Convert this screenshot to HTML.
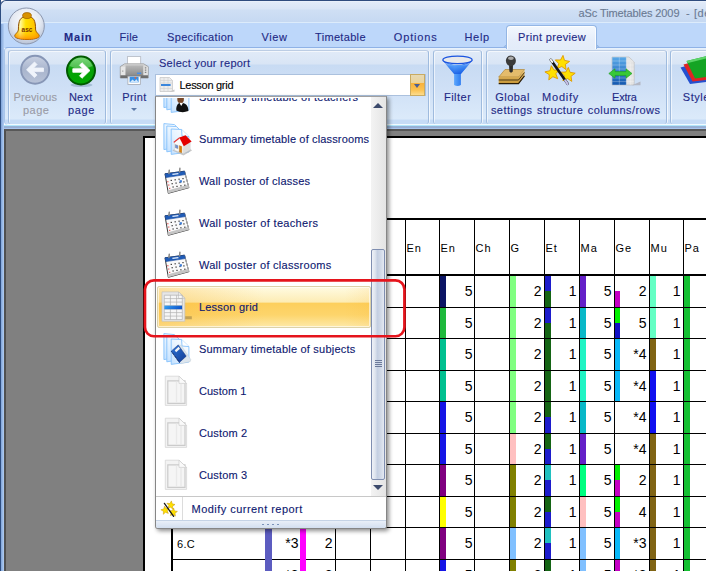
<!DOCTYPE html><html><head><meta charset="utf-8"><title>aSc Timetables 2009</title><style>
*{box-sizing:border-box;margin:0;padding:0}
html,body{width:706px;height:571px;overflow:hidden}
body{position:relative;background:#fff;font-family:"Liberation Sans",sans-serif;font-size:11px;color:#15428b}
.a{position:absolute}
.t{position:absolute;white-space:nowrap;line-height:13px;height:13px;z-index:3;-webkit-text-stroke:0.12px}
.c{text-align:center}
#title{left:0;top:0;width:706px;height:24px;border-top:1px solid #2f4c7e;border-left:1px solid #2f4c7e;border-radius:6px 0 0 0;background:linear-gradient(#f0f5fc 0,#e2ebf9 1px,#d9e5f6 8px,#cfdff4 9px,#c6d9f2 21px,#dcebfb 21px,#dcebfb 22px,#bfd8fa 22px)}
#tabs{left:0;top:23px;width:706px;height:25px;background:#bdd7fa}
#ribbon{left:4px;top:47px;width:702px;height:78px;border-top:1px solid #8fb2e6;border-left:1px solid #a9c5ea;border-radius:4px 0 0 4px;background:linear-gradient(#eaf3fd 0,#e1ebf8 2px,#d9e5f5 16px,#c8dbf3 17px,#cfe0f6 40px,#dbeafa 71px,#c6dcf6 72px,#c6dcf6 76px,#f2faff 76px,#f2faff 100%)}
.grp{position:absolute;top:50px;height:74px;border:1px solid #9fbbde;border-top-color:#bccde4;border-bottom:none;border-radius:3px 3px 3px 3px;box-shadow:1px 0 0 rgba(255,255,255,.7),inset 1px 1px 0 rgba(255,255,255,.6)}
#work{left:4px;top:129px;width:702px;height:442px;background:#808080;border-left:2px solid #505050;border-top:2px solid #585858}
#page{left:143px;top:136px;width:563px;height:435px;background:#fff;border-left:2px solid #000;border-top:2px solid #000}
.vl{position:absolute;width:1px;background:#000}
.hl{position:absolute;height:1px;background:#000}
.num{position:absolute;font-size:14px;line-height:16px;height:16px;color:#000;text-align:right;white-space:nowrap}
.hd{position:absolute;font-size:11px;line-height:13px;color:#000;white-space:nowrap;letter-spacing:1px}
#dd{left:155px;top:96px;width:232px;height:433px;background:#fff;border:1px solid #868686;border-top-color:#a0a0a0;border-radius:0 0 3px 3px;box-shadow:2px 2px 4px rgba(0,0,0,.45)}
.it{position:absolute;left:199px;white-space:nowrap;line-height:13px;height:13px;color:#14226e}
</style></head><body>
<div class="a" id="title"></div>
<div class="t" id="x_title" style="left:578.5px;top:7px;color:#6a7a93;letter-spacing:-0.096px;">aSc Timetables 2009</div>
<div class="t" id="x_title2" style="left:685.9px;top:7px;color:#6a7a93;letter-spacing:0.646px;">- [de</div>
<div class="a" id="tabs"></div>
<div class="a" style="z-index:2;left:506px;top:25px;width:91px;height:24px;border:1px solid #94b6e4;border-bottom:none;border-radius:4px 4px 0 0;background:linear-gradient(#f3f8fe,#e6eefa 60%,#e3ecf9);box-shadow:inset 1px 1px 0 rgba(255,255,255,.8),inset -1px 0 0 rgba(255,255,255,.8)"></div>
<div class="a" style="left:503px;top:45px;width:3px;height:3px;border-right:1px solid #94b6e4;border-bottom:1px solid #94b6e4;border-radius:0 0 3px 0"></div>
<div class="a" style="left:597px;top:45px;width:3px;height:3px;border-left:1px solid #94b6e4;border-bottom:1px solid #94b6e4;border-radius:0 0 0 3px"></div>
<div class="t" id="x_tab_Main" style="left:64.0px;top:31px;color:#1f2a86;font-weight:bold;letter-spacing:0.812px;">Main</div>
<div class="t" id="x_tab_File" style="left:119.5px;top:31px;color:#1f2a86;letter-spacing:0.255px;">File</div>
<div class="t" id="x_tab_Specification" style="left:167.1px;top:31px;color:#1f2a86;letter-spacing:0.310px;">Specification</div>
<div class="t" id="x_tab_View" style="left:261.5px;top:31px;color:#1f2a86;letter-spacing:0.615px;">View</div>
<div class="t" id="x_tab_Timetable" style="left:315.0px;top:31px;color:#1f2a86;letter-spacing:0.326px;">Timetable</div>
<div class="t" id="x_tab_Options" style="left:393.8px;top:31px;color:#1f2a86;letter-spacing:0.846px;">Options</div>
<div class="t" id="x_tab_Help" style="left:464.5px;top:31px;color:#1f2a86;letter-spacing:0.658px;">Help</div>
<div class="t" id="x_tab_Print_preview" style="left:518.0px;top:31px;color:#1f2a86;letter-spacing:0.343px;">Print preview</div>
<div class="a" id="ribbon"></div>
<div class="grp" style="left:8px;width:98px"></div>
<div class="grp" style="left:110px;width:319px"></div>
<div class="grp" style="left:433px;width:49px"></div>
<div class="grp" style="left:486px;width:181px"></div>
<div class="grp" style="left:670px;width:60px"></div>
<div class="a" style="left:0;top:125px;width:706px;height:4px;background:linear-gradient(#bdeeff 0,#a9e0f8 1px,#93abd0 1.6px,#93abd0 2.4px,#a8c5ee 3px,#a8c5ee 4px)"></div>
<div class="a" style="left:0;top:0;width:1px;height:571px;background:#2d4d80"></div>
<div class="a" style="left:1px;top:24px;width:3px;height:547px;background:linear-gradient(90deg,#7fa3d8,#b3cff4)"></div>
<div class="t" id="x_prev1" style="left:13.5px;top:91px;color:#9a9ba6;letter-spacing:0.115px;">Previous</div>
<div class="t" id="x_prev2" style="left:23.0px;top:104px;color:#9a9ba6;letter-spacing:0.505px;">page</div>
<div class="t" id="x_next1" style="left:68.9px;top:91px;color:#1f2a86;letter-spacing:0.258px;">Next</div>
<div class="t" id="x_next2" style="left:67.9px;top:104px;color:#1f2a86;letter-spacing:0.672px;">page</div>
<div class="t" id="x_print" style="left:122.2px;top:91px;color:#1f2a86;letter-spacing:0.394px;">Print</div>
<div class="a" style="left:131px;top:108px;width:0;height:0;border-left:3px solid transparent;border-right:3px solid transparent;border-top:3px solid #5b78a8"></div>
<div class="t" id="x_sel" style="left:159.0px;top:57px;color:#1f2a86;letter-spacing:0.251px;">Select your report</div>
<div class="t" id="x_filter" style="left:444.0px;top:91px;color:#1f2a86;letter-spacing:0.469px;">Filter</div>
<div class="t" id="x_glob1" style="left:495.2px;top:91px;color:#1f2a86;letter-spacing:0.481px;">Global</div>
<div class="t" id="x_glob2" style="left:490.9px;top:104px;color:#1f2a86;letter-spacing:0.468px;">settings</div>
<div class="t" id="x_mod1" style="left:542.1px;top:91px;color:#1f2a86;letter-spacing:0.759px;">Modify</div>
<div class="t" id="x_mod2" style="left:537.0px;top:104px;color:#1f2a86;letter-spacing:0.400px;">structure</div>
<div class="t" id="x_ext1" style="left:612.1px;top:91px;color:#1f2a86;letter-spacing:-0.222px;">Extra</div>
<div class="t" id="x_ext2" style="left:587.8px;top:104px;color:#1f2a86;letter-spacing:0.450px;">columns/rows</div>
<div class="t" id="x_style" style="left:682.8px;top:91px;color:#1f2a86;letter-spacing:0.558px;">Style</div>
<div class="a" style="left:155px;top:74px;width:271px;height:22px;background:#fff;border:1px solid #abc1de"></div>
<div class="a" style="left:410px;top:74px;width:15px;height:22px;background:linear-gradient(#e6d9b4 0,#ecd49a 38%,#f9b23a 42%,#fbc252 75%,#fddc8c 100%);border:1px solid #c9ab62"></div>
<div class="a" style="left:414px;top:84px;width:0;height:0;border-left:3.5px solid transparent;border-right:3.5px solid transparent;border-top:4px solid #4a5f94"></div>
<div class="t" id="x_combo" style="left:179.5px;top:79px;color:#000;letter-spacing:-0.287px;">Lesson grid</div>
<svg class="a" style="left:0;top:0" width="706" height="130" viewBox="0 0 706 130">
<defs>
<radialGradient id="gOrb" cx="50%" cy="35%" r="65%"><stop offset="0" stop-color="#ffffff"/><stop offset="0.6" stop-color="#e4e9f2"/><stop offset="1" stop-color="#b9c3d6"/></radialGradient>
<linearGradient id="gBell" x1="0" y1="0" x2="1" y2="0"><stop offset="0" stop-color="#f0a800"/><stop offset="0.22" stop-color="#fff8a0"/><stop offset="0.45" stop-color="#ffe000"/><stop offset="0.8" stop-color="#ffc400"/><stop offset="1" stop-color="#f09000"/></linearGradient>
<linearGradient id="gBell2" x1="0" y1="0" x2="0" y2="1"><stop offset="0.45" stop-color="#ffe600" stop-opacity="0"/><stop offset="1" stop-color="#ff8800" stop-opacity="0.85"/></linearGradient>
<linearGradient id="gPrev" x1="0" y1="0" x2="0" y2="1"><stop offset="0" stop-color="#c9d1e3"/><stop offset="0.5" stop-color="#a9b5cd"/><stop offset="1" stop-color="#b9c3d8"/></linearGradient>
<linearGradient id="gNext" x1="0" y1="0" x2="0" y2="1"><stop offset="0" stop-color="#4ccc4c"/><stop offset="0.45" stop-color="#06a006"/><stop offset="1" stop-color="#00a800"/></linearGradient>
<linearGradient id="gPrn" x1="0" y1="0" x2="0" y2="1"><stop offset="0" stop-color="#e6e6e6"/><stop offset="1" stop-color="#9a9a9a"/></linearGradient>
<linearGradient id="gPrn2" x1="0" y1="0" x2="0" y2="1"><stop offset="0" stop-color="#b8b8b8"/><stop offset="1" stop-color="#8a8a8a"/></linearGradient>
<linearGradient id="gFun" x1="0" y1="0" x2="1" y2="0"><stop offset="0" stop-color="#0f4ee0"/><stop offset="0.4" stop-color="#5aa4fc"/><stop offset="0.55" stop-color="#3a88f4"/><stop offset="1" stop-color="#0c44d8"/></linearGradient>
<linearGradient id="gFun2" x1="0" y1="0" x2="0" y2="1"><stop offset="0" stop-color="#e8f4ff"/><stop offset="0.35" stop-color="#4c98f8"/><stop offset="1" stop-color="#0c50e0"/></linearGradient>
<linearGradient id="gTan" x1="0" y1="0" x2="0" y2="1"><stop offset="0" stop-color="#e8c070"/><stop offset="1" stop-color="#c89838"/></linearGradient>
<linearGradient id="gBlu" x1="0" y1="0" x2="0" y2="1"><stop offset="0" stop-color="#58a8e8"/><stop offset="1" stop-color="#1458b0"/></linearGradient>
</defs>
<circle cx="26.3" cy="26" r="18" fill="url(#gOrb)" stroke="#8c97ae" stroke-width="1"/>
<path d="M18.4 30 C18.4 20.5 20 16.6 27 16.6 C34 16.6 35.6 20.5 35.6 30 C36 33 39.2 33.6 39.2 36 C39.2 40.6 14.8 40.6 14.8 36 C14.8 33.6 18 33 18.4 30 Z" fill="url(#gBell)" stroke="#8e4e00" stroke-width="1"/>
<path d="M18.4 30 C18.4 20.5 20 16.6 27 16.6 C34 16.6 35.6 20.5 35.6 30 C36 33 39.2 33.6 39.2 36 C39.2 40.6 14.8 40.6 14.8 36 C14.8 33.6 18 33 18.4 30 Z" fill="url(#gBell2)"/>
<ellipse cx="27" cy="15.6" rx="4.4" ry="3" fill="#d89200" stroke="#9a5a00" stroke-width="0.7"/>
<text x="27" y="32" font-family="Liberation Sans, sans-serif" font-size="6.5" font-weight="bold" fill="#7a3400" text-anchor="middle">asc</text>
<circle cx="35.1" cy="69.8" r="14" fill="url(#gPrev)" stroke="#8796b6" stroke-width="1.9"/>
<path d="M26.5 69.8 L34.5 62 L37 64.5 L33.6 68 L43.5 68 L43.5 71.6 L33.6 71.6 L37 75.1 L34.5 77.6 Z" fill="#f0f4fb" stroke="#f0f4fb" stroke-width="0.8" stroke-linejoin="round"/>
<ellipse cx="81.5" cy="85" rx="11" ry="2" fill="#5a7a9a" opacity="0.35"/><circle cx="81" cy="70.5" r="14" fill="url(#gNext)" stroke="#005a00" stroke-width="2"/><path d="M69.5 66 A12 12 0 0 1 92.5 66 Q81 72 69.5 66 Z" fill="#ffffff" opacity="0.28"/>
<path d="M90 70.5 L82 62.7 L79.5 65.2 L82.9 68.7 L72.8 68.7 L72.8 72.3 L82.9 72.3 L79.5 75.8 L82 78.3 Z" fill="#fff" stroke="#fff" stroke-width="0.8" stroke-linejoin="round"/>
<rect x="127.5" y="56.6" width="13.2" height="8.4" fill="#fff" stroke="#b4b8c2" stroke-width="0.8"/>
<path d="M124.8 63.8 H143.6 L148.2 66.6 V78 H120.3 V66.6 Z" fill="url(#gPrn)" stroke="#868686" stroke-width="0.7"/>
<path d="M124.8 63.8 H143.6 L145 65.4 H123.2 Z" fill="#c9c9c9"/>
<rect x="120.7" y="66.8" width="4.9" height="8.6" fill="#e6e6e6"/><rect x="143.2" y="66.8" width="4.7" height="8.6" fill="#e2e2e2"/>
<rect x="125.6" y="65.4" width="17.6" height="10.2" fill="url(#gPrn2)"/>
<rect x="120.6" y="75.4" width="27.3" height="2.6" fill="#6e6e6e"/>
<rect x="137" y="72.6" width="4.2" height="1.3" fill="#3c8cf0"/>
<rect x="144.8" y="67.4" width="1.5" height="1" fill="#6a6a6a"/><rect x="144.8" y="69.6" width="1.5" height="1" fill="#6a6a6a"/><rect x="144.8" y="71.8" width="1.5" height="1" fill="#6a6a6a"/><rect x="122" y="70.6" width="1.4" height="1" fill="#9a9a9a"/>
<rect x="127.9" y="76.2" width="12.4" height="8.2" fill="#fff" stroke="#a4a8b0" stroke-width="0.8"/>
<rect x="129.6" y="76.8" width="9" height="5.6" fill="#3a90e4"/><path d="M129.6 82.4 L132.5 79.4 L134.5 81.2 L136.5 79.2 L138.6 82.4 Z" fill="#cfe6fb"/><circle cx="135.4" cy="77.8" r="0.9" fill="#f06030"/>
<path d="M160 77.5 H169.5 L172.5 80.5 V91.5 H160 Z" fill="#ececec" stroke="#c4c4c4" stroke-width="0.7"/>
<path d="M160 80.5 H172.5 M160 83 H172.5 M160 88.5 H172.5 M164 77.5 V91.5 M168 77.5 V91.5" stroke="#d0d0d0" stroke-width="0.6" fill="none"/>
<rect x="161" y="84" width="9.6" height="2" fill="#3a86dc"/>
<path d="M169 91.8 H174.5 V89.6 Z" fill="#c8c8c8"/>
<path d="M442.4 60 L454.1 74 V85 Q457.5 87 460.9 85 V74 L472.6 60 Q457.5 70 442.4 60 Z" fill="url(#gFun)"/>
<path d="M444 62 Q457.5 69 471 62 L460.9 74 H454.1 Z" fill="url(#gFun2)" opacity="0.7"/>
<ellipse cx="457.5" cy="59.9" rx="14.6" ry="3.8" fill="#e9e9ea" stroke="#1a54e0" stroke-width="1.3"/>
<path d="M498.7 77 L505 69.5 H524.5 L518.5 77 Z" fill="#e4bc6c" stroke="#a87c28" stroke-width="0.6"/>
<path d="M498.7 77 H518.5 L524.5 69.5 V75.5 L518.5 83.5 H498.7 Z" fill="url(#gTan)"/>
<path d="M498.7 80 H518.5 L524.5 72.5" stroke="#3a2a10" stroke-width="0.9" fill="none"/>
<path d="M498.7 83.7 H518.5 L524.5 75.8" stroke="#2a1c08" stroke-width="1.2" fill="none"/>
<path d="M509 64 L509.4 71.5 Q511 73.8 512.8 71.5 L513 64 Z" fill="#2c2c2c"/>
<ellipse cx="510.9" cy="60.8" rx="5" ry="5.4" fill="#3a3a3a"/><ellipse cx="511" cy="58.2" rx="2.8" ry="1.8" fill="#c8c8c8" opacity="0.8"/>
<polygon points="563.0,55.4 564.5,60.4 569.6,61.4 565.4,64.4 566.0,69.6 561.8,66.5 557.1,68.6 558.8,63.7 555.3,59.9 560.5,60.0" fill="#ffe000" stroke="#e09a00" stroke-width="0.9" stroke-linejoin="round"/>
<polygon points="551.3,65.7 554.0,70.1 559.2,69.9 555.8,73.8 557.7,78.7 552.9,76.7 548.8,79.9 549.3,74.7 544.9,71.9 550.0,70.7" fill="#ffe000" stroke="#e09a00" stroke-width="0.9" stroke-linejoin="round"/>
<polygon points="568.3,67.4 570.0,72.3 575.2,73.2 571.0,76.3 571.8,81.4 567.6,78.5 562.9,80.8 564.4,75.8 560.8,72.2 565.9,72.0" fill="#ffe000" stroke="#e09a00" stroke-width="0.9" stroke-linejoin="round"/>
<path d="M550.8 59.8 L567.6 83.8" stroke="#141414" stroke-width="2.6" stroke-linecap="round"/>
<path d="M550.8 59.8 L552.3 62" stroke="#f4f4f4" stroke-width="2" stroke-linecap="round"/><path d="M565.2 80.4 L567.6 83.8" stroke="#c4c0e8" stroke-width="2.2" stroke-linecap="round"/>
<path d="M612 57 H629 L634.2 62 V85 H612 Z" fill="#e4e4e4" stroke="#b8b8b8" stroke-width="0.6"/>
<rect x="612.3" y="57.3" width="14" height="27.5" fill="url(#gBlu)"/>
<path d="M612.3 61 H634 M612.3 65 H634 M612.3 69 H634 M612.3 78 H634 M612.3 81.6 H634 M619.3 57.3 V85 M626.3 57.3 V85 M630.3 62 V85" stroke="#ffffff" stroke-opacity="0.45" stroke-width="0.6" fill="none"/>
<path d="M608.8 73.5 L615 68.8 V71.6 H626 V68.8 L632 73.5 L626 78.2 V75.4 H615 V78.2 Z" fill="#38c838" stroke="#1c9a1c" stroke-width="0.6"/>
<path d="M632 85.2 H640.5 V81.5 Z" fill="#b4b8c4"/>
<path d="M680.5 67.5 L706 60.5 V82 L690 84 Z" fill="#2450d0"/>
<path d="M683.5 64.5 L706 58.5 V80 L692.5 81.5 Z" fill="#e02424"/>
<path d="M686.5 61 L706 56.2 V77 L695 78.5 Z" fill="#14a424"/><path d="M686.5 61 L706 56.2 V58.5 L688 63 Z" fill="#5cd468"/>
</svg>
<div class="a" id="work"></div>
<div class="a" id="page"></div>
<div class="hl" style="left:172px;top:218px;width:534px;height:2px"></div>
<div class="hl" style="left:172px;top:274px;width:534px;height:2px"></div>
<div class="vl" style="left:171px;top:218px;width:2px;height:353px"></div>
<div class="vl" style="left:335px;top:220px;height:351px"></div>
<div class="vl" style="left:370px;top:220px;height:351px"></div>
<div class="vl" style="left:405px;top:220px;height:351px"></div>
<div class="vl" style="left:439px;top:220px;height:351px"></div>
<div class="vl" style="left:474px;top:220px;height:351px"></div>
<div class="vl" style="left:509px;top:220px;height:351px"></div>
<div class="vl" style="left:544px;top:220px;height:351px"></div>
<div class="vl" style="left:579px;top:220px;height:351px"></div>
<div class="vl" style="left:614px;top:220px;height:351px"></div>
<div class="vl" style="left:649px;top:220px;height:351px"></div>
<div class="vl" style="left:683px;top:220px;height:351px"></div>
<div class="vl" style="left:718px;top:220px;height:351px"></div>
<div class="hl" style="left:172px;top:307px;width:534px"></div>
<div class="hl" style="left:172px;top:338px;width:534px"></div>
<div class="hl" style="left:172px;top:370px;width:534px"></div>
<div class="hl" style="left:172px;top:401px;width:534px"></div>
<div class="hl" style="left:172px;top:433px;width:534px"></div>
<div class="hl" style="left:172px;top:464px;width:534px"></div>
<div class="hl" style="left:172px;top:496px;width:534px"></div>
<div class="hl" style="left:172px;top:527px;width:534px"></div>
<div class="hl" style="left:172px;top:559px;width:534px"></div>
<div class="hd" style="left:406.5px;top:242px">En</div>
<div class="hd" style="left:440.5px;top:242px">En</div>
<div class="hd" style="left:475.5px;top:242px">Ch</div>
<div class="hd" style="left:510.5px;top:242px">G</div>
<div class="hd" style="left:545.5px;top:242px">Et</div>
<div class="hd" style="left:580.5px;top:242px">Ma</div>
<div class="hd" style="left:615.5px;top:242px">Ge</div>
<div class="hd" style="left:650.5px;top:242px">Mu</div>
<div class="hd" style="left:684.5px;top:242px">Pa</div>
<div class="a" style="left:440px;top:276px;width:6px;height:31px;background:#0b1464"></div>
<div class="a" style="left:510px;top:276px;width:6px;height:31px;background:#80ff80"></div>
<div class="a" style="left:545px;top:276px;width:6px;height:15px;background:#1c1ccc"></div>
<div class="a" style="left:545px;top:291px;width:6px;height:16px;background:#146414"></div>
<div class="a" style="left:580px;top:276px;width:6px;height:31px;background:#6420c8"></div>
<div class="a" style="left:615px;top:291px;width:5px;height:16px;background:#c400c4"></div>
<div class="a" style="left:650px;top:276px;width:6px;height:31px;background:#64ffc4"></div>
<div class="a" style="left:684px;top:276px;width:6px;height:31px;background:#14c032"></div>
<div class="num" style="left:432.5px;width:40px;top:283px">5</div>
<div class="num" style="left:501.5px;width:40px;top:283px">2</div>
<div class="num" style="left:536.5px;width:40px;top:283px">1</div>
<div class="num" style="left:571.5px;width:40px;top:283px">5</div>
<div class="num" style="left:606.5px;width:40px;top:283px">2</div>
<div class="num" style="left:640.5px;width:40px;top:283px">1</div>
<div class="a" style="left:440px;top:308px;width:6px;height:30px;background:#1eb93c"></div>
<div class="a" style="left:510px;top:308px;width:6px;height:30px;background:#80ff80"></div>
<div class="a" style="left:545px;top:308px;width:6px;height:15px;background:#1c1ccc"></div>
<div class="a" style="left:545px;top:323px;width:6px;height:15px;background:#146414"></div>
<div class="a" style="left:580px;top:308px;width:6px;height:30px;background:#08b8c8"></div>
<div class="a" style="left:615px;top:308px;width:5px;height:15px;background:#00f000"></div>
<div class="a" style="left:615px;top:323px;width:5px;height:15px;background:#1010c4"></div>
<div class="a" style="left:650px;top:308px;width:6px;height:30px;background:#64ffc4"></div>
<div class="a" style="left:684px;top:308px;width:6px;height:30px;background:#14c032"></div>
<div class="num" style="left:432.5px;width:40px;top:315px">5</div>
<div class="num" style="left:501.5px;width:40px;top:315px">2</div>
<div class="num" style="left:536.5px;width:40px;top:315px">1</div>
<div class="num" style="left:571.5px;width:40px;top:315px">5</div>
<div class="num" style="left:606.5px;width:40px;top:315px">5</div>
<div class="num" style="left:640.5px;width:40px;top:315px">1</div>
<div class="a" style="left:440px;top:339px;width:6px;height:31px;background:#00c090"></div>
<div class="a" style="left:510px;top:339px;width:6px;height:31px;background:#80ff80"></div>
<div class="a" style="left:545px;top:339px;width:6px;height:31px;background:#146414"></div>
<div class="a" style="left:580px;top:339px;width:6px;height:31px;background:#20f4c4"></div>
<div class="a" style="left:615px;top:339px;width:5px;height:31px;background:#08b8f8"></div>
<div class="a" style="left:650px;top:339px;width:6px;height:31px;background:#806414"></div>
<div class="a" style="left:684px;top:339px;width:6px;height:31px;background:#14c032"></div>
<div class="num" style="left:432.5px;width:40px;top:346px">5</div>
<div class="num" style="left:501.5px;width:40px;top:346px">2</div>
<div class="num" style="left:536.5px;width:40px;top:346px">1</div>
<div class="num" style="left:571.5px;width:40px;top:346px">5</div>
<div class="num" style="left:606.5px;width:40px;top:346px">*4</div>
<div class="num" style="left:640.5px;width:40px;top:346px">1</div>
<div class="a" style="left:440px;top:371px;width:6px;height:30px;background:#00c090"></div>
<div class="a" style="left:510px;top:371px;width:6px;height:30px;background:#80ff80"></div>
<div class="a" style="left:545px;top:371px;width:6px;height:30px;background:#146414"></div>
<div class="a" style="left:580px;top:371px;width:6px;height:30px;background:#20f4c4"></div>
<div class="a" style="left:615px;top:371px;width:5px;height:30px;background:#08b8f8"></div>
<div class="a" style="left:650px;top:371px;width:6px;height:30px;background:#1010f0"></div>
<div class="a" style="left:684px;top:371px;width:6px;height:30px;background:#14c032"></div>
<div class="num" style="left:432.5px;width:40px;top:378px">5</div>
<div class="num" style="left:501.5px;width:40px;top:378px">2</div>
<div class="num" style="left:536.5px;width:40px;top:378px">1</div>
<div class="num" style="left:571.5px;width:40px;top:378px">5</div>
<div class="num" style="left:606.5px;width:40px;top:378px">*4</div>
<div class="num" style="left:640.5px;width:40px;top:378px">1</div>
<div class="a" style="left:440px;top:402px;width:6px;height:31px;background:#1515e6"></div>
<div class="a" style="left:510px;top:402px;width:6px;height:31px;background:#80ff80"></div>
<div class="a" style="left:545px;top:402px;width:6px;height:15px;background:#146414"></div>
<div class="a" style="left:545px;top:417px;width:6px;height:16px;background:#1c1ccc"></div>
<div class="a" style="left:580px;top:402px;width:6px;height:31px;background:#08b8c8"></div>
<div class="a" style="left:650px;top:402px;width:6px;height:31px;background:#1010f0"></div>
<div class="a" style="left:684px;top:402px;width:6px;height:31px;background:#14c032"></div>
<div class="num" style="left:432.5px;width:40px;top:409px">5</div>
<div class="num" style="left:501.5px;width:40px;top:409px">2</div>
<div class="num" style="left:536.5px;width:40px;top:409px">1</div>
<div class="num" style="left:571.5px;width:40px;top:409px">5</div>
<div class="num" style="left:606.5px;width:40px;top:409px">*4</div>
<div class="num" style="left:640.5px;width:40px;top:409px">1</div>
<div class="a" style="left:440px;top:434px;width:6px;height:30px;background:#1515e6"></div>
<div class="a" style="left:510px;top:434px;width:6px;height:30px;background:#ffc0c0"></div>
<div class="a" style="left:545px;top:434px;width:6px;height:15px;background:#146414"></div>
<div class="a" style="left:545px;top:449px;width:6px;height:15px;background:#1c1ccc"></div>
<div class="a" style="left:580px;top:434px;width:6px;height:30px;background:#6420c8"></div>
<div class="a" style="left:650px;top:434px;width:6px;height:30px;background:#806414"></div>
<div class="a" style="left:684px;top:434px;width:6px;height:30px;background:#14c032"></div>
<div class="num" style="left:432.5px;width:40px;top:441px">5</div>
<div class="num" style="left:501.5px;width:40px;top:441px">2</div>
<div class="num" style="left:536.5px;width:40px;top:441px">1</div>
<div class="num" style="left:571.5px;width:40px;top:441px">5</div>
<div class="num" style="left:606.5px;width:40px;top:441px">*4</div>
<div class="num" style="left:640.5px;width:40px;top:441px">1</div>
<div class="a" style="left:440px;top:465px;width:6px;height:31px;background:#800080"></div>
<div class="a" style="left:510px;top:465px;width:6px;height:31px;background:#808000"></div>
<div class="a" style="left:545px;top:465px;width:6px;height:15px;background:#20c0c0"></div>
<div class="a" style="left:545px;top:480px;width:6px;height:16px;background:#1c1ccc"></div>
<div class="a" style="left:580px;top:465px;width:6px;height:31px;background:#00ff80"></div>
<div class="a" style="left:615px;top:465px;width:5px;height:15px;background:#00f000"></div>
<div class="a" style="left:615px;top:480px;width:5px;height:16px;background:#c400c4"></div>
<div class="a" style="left:650px;top:465px;width:6px;height:31px;background:#806414"></div>
<div class="a" style="left:684px;top:465px;width:6px;height:31px;background:#14c032"></div>
<div class="num" style="left:432.5px;width:40px;top:472px">5</div>
<div class="num" style="left:501.5px;width:40px;top:472px">2</div>
<div class="num" style="left:536.5px;width:40px;top:472px">1</div>
<div class="num" style="left:571.5px;width:40px;top:472px">5</div>
<div class="num" style="left:606.5px;width:40px;top:472px">2</div>
<div class="num" style="left:640.5px;width:40px;top:472px">1</div>
<div class="a" style="left:440px;top:497px;width:6px;height:30px;background:#ffff00"></div>
<div class="a" style="left:510px;top:497px;width:6px;height:30px;background:#808000"></div>
<div class="a" style="left:545px;top:497px;width:6px;height:15px;background:#146414"></div>
<div class="a" style="left:545px;top:512px;width:6px;height:15px;background:#1c1ccc"></div>
<div class="a" style="left:580px;top:497px;width:6px;height:30px;background:#ffc0c0"></div>
<div class="a" style="left:615px;top:497px;width:5px;height:15px;background:#00f000"></div>
<div class="a" style="left:615px;top:512px;width:5px;height:15px;background:#c400c4"></div>
<div class="a" style="left:650px;top:497px;width:6px;height:30px;background:#806414"></div>
<div class="a" style="left:684px;top:497px;width:6px;height:30px;background:#14c032"></div>
<div class="num" style="left:432.5px;width:40px;top:504px">5</div>
<div class="num" style="left:501.5px;width:40px;top:504px">2</div>
<div class="num" style="left:536.5px;width:40px;top:504px">1</div>
<div class="num" style="left:571.5px;width:40px;top:504px">5</div>
<div class="num" style="left:606.5px;width:40px;top:504px">4</div>
<div class="num" style="left:640.5px;width:40px;top:504px">1</div>
<div class="a" style="left:440px;top:528px;width:6px;height:31px;background:#800080"></div>
<div class="a" style="left:510px;top:528px;width:6px;height:31px;background:#80c0ff"></div>
<div class="a" style="left:545px;top:528px;width:6px;height:15px;background:#20c0c0"></div>
<div class="a" style="left:545px;top:543px;width:6px;height:16px;background:#1c1ccc"></div>
<div class="a" style="left:580px;top:528px;width:6px;height:31px;background:#80c0ff"></div>
<div class="a" style="left:615px;top:528px;width:5px;height:31px;background:#08b8f8"></div>
<div class="a" style="left:650px;top:528px;width:6px;height:31px;background:#806414"></div>
<div class="a" style="left:684px;top:528px;width:6px;height:31px;background:#14c032"></div>
<div class="num" style="left:432.5px;width:40px;top:535px">5</div>
<div class="num" style="left:501.5px;width:40px;top:535px">2</div>
<div class="num" style="left:536.5px;width:40px;top:535px">1</div>
<div class="num" style="left:571.5px;width:40px;top:535px">5</div>
<div class="num" style="left:606.5px;width:40px;top:535px">*3</div>
<div class="num" style="left:640.5px;width:40px;top:535px">1</div>
<div class="a" style="left:440px;top:560px;width:6px;height:11px;background:#1515e6"></div>
<div class="a" style="left:510px;top:560px;width:6px;height:11px;background:#808000"></div>
<div class="a" style="left:545px;top:560px;width:6px;height:11px;background:#146414"></div>
<div class="a" style="left:580px;top:560px;width:6px;height:11px;background:#80c0ff"></div>
<div class="a" style="left:615px;top:560px;width:5px;height:11px;background:#c400c4"></div>
<div class="a" style="left:650px;top:560px;width:6px;height:11px;background:#806414"></div>
<div class="a" style="left:684px;top:560px;width:6px;height:11px;background:#14c032"></div>
<div class="num" style="left:432.5px;width:40px;top:567px">5</div>
<div class="num" style="left:501.5px;width:40px;top:567px">2</div>
<div class="num" style="left:536.5px;width:40px;top:567px">1</div>
<div class="num" style="left:571.5px;width:40px;top:567px">5</div>
<div class="num" style="left:606.5px;width:40px;top:567px">*3</div>
<div class="num" style="left:640.5px;width:40px;top:567px">1</div>
<div class="a" style="left:265px;top:528px;width:7px;height:43px;background:#5c5cc0"></div>
<div class="a" style="left:300px;top:528px;width:6px;height:43px;background:#ff00ff"></div>
<div class="num" style="left:258.5px;width:40px;top:535px">*3</div>
<div class="num" style="left:292.5px;width:40px;top:535px">2</div>
<div class="num" style="left:258.5px;width:40px;top:567px">*3</div>
<div class="num" style="left:292.5px;width:40px;top:567px">2</div>
<div class="hd" style="left:177px;top:538px;letter-spacing:0.3px">6.C</div>
<div class="a" id="dd"></div>
<div class="a" style="left:371px;top:97px;width:15px;height:399px;background:linear-gradient(90deg,#f3f3f3,#e4e4e4)"></div>
<div class="a" style="left:373px;top:103px;width:0;height:0;border-left:5px solid transparent;border-right:5px solid transparent;border-bottom:5px solid #3c4a6c"></div>
<div class="a" style="left:373px;top:485px;width:0;height:0;border-left:5px solid transparent;border-right:5px solid transparent;border-top:5px solid #3c4a6c"></div>
<div class="a" style="left:371px;top:249px;width:14px;height:231px;border:1px solid #7f8eb0;border-radius:2px;background:linear-gradient(90deg,#eef1f7 0,#dfe5ef 25%,#c4cfe2 45%,#d2dae8 75%,#e4e9f2 100%)"></div>
<div class="a" style="left:375px;top:360px;width:7px;height:1px;background:#6c7a9a"></div>
<div class="a" style="left:375px;top:362px;width:7px;height:1px;background:#6c7a9a"></div>
<div class="a" style="left:375px;top:364px;width:7px;height:1px;background:#6c7a9a"></div>
<div class="a" style="left:375px;top:366px;width:7px;height:1px;background:#6c7a9a"></div>
<div class="a" style="left:157px;top:286px;width:214px;height:42px;border:1px solid #dcd2a8;border-radius:2px;box-shadow:inset 0 0 0 1px rgba(255,255,255,.6);background:linear-gradient(90deg,rgba(249,176,40,.32) 0,rgba(249,176,40,0) 50%,rgba(249,176,40,0) 88%,rgba(249,176,40,.12) 100%),linear-gradient(#fffbe2 0,#fdecb4 38%,#fdcf5c 40%,#fdd56c 70%,#fde9a8 100%)"></div>
<div class="a" style="left:156px;top:98px;width:215px;height:398px;overflow:hidden">
<div style="position:absolute;left:-156px;top:-98px">
<div class="t" id="x_it0" style="left:198.9px;top:91px;color:#0e1870;letter-spacing:0.245px;">Summary timetable of teachers</div>
</div>
<div style="position:absolute;left:-156px;top:-98px">
<div class="t" id="x_it1" style="left:198.9px;top:133px;color:#0e1870;letter-spacing:0.148px;">Summary timetable of classrooms</div>
</div>
<div style="position:absolute;left:-156px;top:-98px">
<div class="t" id="x_it2" style="left:198.9px;top:175px;color:#0e1870;letter-spacing:0.215px;">Wall poster of classes</div>
</div>
<div style="position:absolute;left:-156px;top:-98px">
<div class="t" id="x_it3" style="left:198.9px;top:217px;color:#0e1870;letter-spacing:0.318px;">Wall poster of teachers</div>
</div>
<div style="position:absolute;left:-156px;top:-98px">
<div class="t" id="x_it4" style="left:198.9px;top:259px;color:#0e1870;letter-spacing:0.286px;">Wall poster of classrooms</div>
</div>
<div style="position:absolute;left:-156px;top:-98px">
<div class="t" id="x_it5" style="left:198.9px;top:301px;color:#0e1870;letter-spacing:0.222px;">Lesson grid</div>
</div>
<div style="position:absolute;left:-156px;top:-98px">
<div class="t" id="x_it6" style="left:198.9px;top:343px;color:#0e1870;letter-spacing:0.211px;">Summary timetable of subjects</div>
</div>
<div style="position:absolute;left:-156px;top:-98px">
<div class="t" id="x_it7" style="left:198.9px;top:385px;color:#0e1870;letter-spacing:0.060px;">Custom 1</div>
</div>
<div style="position:absolute;left:-156px;top:-98px">
<div class="t" id="x_it8" style="left:198.9px;top:427px;color:#0e1870;letter-spacing:0.175px;">Custom 2</div>
</div>
<div style="position:absolute;left:-156px;top:-98px">
<div class="t" id="x_it9" style="left:198.9px;top:469px;color:#0e1870;letter-spacing:0.175px;">Custom 3</div>
</div>
</div>
<svg class="a" style="left:156px;top:98px" width="215" height="430" viewBox="156 98 215 430">
<defs><linearGradient id="gBand" x1="0" y1="0" x2="1" y2="0.3"><stop offset="0" stop-color="#38a4f4"/><stop offset="1" stop-color="#1058cc"/></linearGradient><linearGradient id="gPg" x1="1" y1="0" x2="0" y2="1"><stop offset="0" stop-color="#ffffff"/><stop offset="0.55" stop-color="#e6f3ff"/><stop offset="1" stop-color="#c2e0ff"/></linearGradient><linearGradient id="gBook" x1="0" y1="0" x2="1" y2="1"><stop offset="0" stop-color="#2c74d8"/><stop offset="1" stop-color="#123c94"/></linearGradient></defs>
<g transform="translate(0,-42)" fill="url(#gPg)" stroke="#86c2fc" stroke-width="0.9" stroke-linejoin="round"><path d="M163.9 123.6 L174.5 124.6 L179.5 129.8 V147 L163.9 149.6 Z"/><path d="M166.8 126 L176.4 126.6 L182 132 V149.5 L166.8 151.8 Z"/><path d="M171.2 129 L181.6 129.5 L188.9 136.6 V152 L171.2 154.4 Z"/><path d="M181.6 129.5 L182 136 L188.9 136.6" fill="#ffffff"/></g>
<g><path d="M176.3 110.5 C175.8 104.5 179 102.8 181 102.8 C184.5 102.8 188.6 105 188.4 111 Q182 113.5 176.3 110.5 Z" fill="#111"/><ellipse cx="180.6" cy="99" rx="3.3" ry="4.3" fill="#7a4a2a"/><path d="M179.4 102.8 L181.2 106 L183 103 Z" fill="#fff"/></g>
<g transform="translate(0,0)" fill="url(#gPg)" stroke="#86c2fc" stroke-width="0.9" stroke-linejoin="round"><path d="M163.9 123.6 L174.5 124.6 L179.5 129.8 V147 L163.9 149.6 Z"/><path d="M166.8 126 L176.4 126.6 L182 132 V149.5 L166.8 151.8 Z"/><path d="M171.2 129 L181.6 129.5 L188.9 136.6 V152 L171.2 154.4 Z"/><path d="M181.6 129.5 L182 136 L188.9 136.6" fill="#ffffff"/></g>
<g><path d="M172.4 150.4 L183.4 155.4 L192 150.6 L190 148.5 L175 148.5 Z" fill="#b9b9b9" opacity="0.8"/><path d="M174.5 141.6 L179.6 137.4 L183.7 145.8 V153.6 L174.5 150.2 Z" fill="#fafafa" stroke="#d0d0d0" stroke-width="0.4"/><path d="M183.7 145.8 L190.6 141.8 V149.6 L183.7 153.6 Z" fill="#dedede"/><path d="M179.3 137.4 L185.6 135.2 L191.6 141.6 L183.8 146.2 Z" fill="#e40000"/><path d="M173.3 141.9 L179.3 137.2 L180 138.2 L174.2 142.8 Z" fill="#e83030"/><path d="M175.2 144.4 L178 145.4 V148.8 L175.2 147.8 Z" fill="#6e8fd6" stroke="#9a8a6a" stroke-width="0.3"/><path d="M179.3 145.6 L181.8 146.5 V152.8 L179.3 151.9 Z" fill="#d8820c" stroke="#a05c08" stroke-width="0.3"/></g>
<g transform="translate(160,162.6)"><path d="M5 11.2 L24.5 8.6 L28.9 25.1 L8.3 30.7 Z" fill="#fafafa" stroke="#3c3c3c" stroke-width="1"/><path d="M24.5 8.6 L28.9 25.1" stroke="#b4b4b4" stroke-width="1"/><path d="M5 11.2 L24.5 8.6 L25.3 12 L5.9 15 Z" fill="#1f5cb8" stroke="#1a4a9c" stroke-width="0.6"/><path d="M7.5 27.8 L28.2 22.2 L28.9 25.1 L8.3 30.7 Z" fill="#c4c4c4"/><path d="M9.3 7.6 L8.9 11 M19.9 5.6 L19.6 9.4" stroke="#8a8a8a" stroke-width="1.5" stroke-linecap="round"/><g fill="#484848"><rect x="10.6" y="17.2" width="1.4" height="1.2"/><rect x="14.5" y="16.6" width="1.4" height="1.2"/><rect x="18.4" y="16.0" width="1.4" height="1.2"/><rect x="22.3" y="15.4" width="1.4" height="1.2"/><rect x="11.5" y="20.5" width="1.4" height="1.2"/><rect x="15.4" y="19.9" width="1.4" height="1.2"/><rect x="19.3" y="19.3" width="1.4" height="1.2"/><rect x="23.2" y="18.7" width="1.4" height="1.2"/><rect x="12.4" y="23.8" width="1.4" height="1.2"/><rect x="16.3" y="23.2" width="1.4" height="1.2"/><rect x="20.2" y="22.6" width="1.4" height="1.2"/><rect x="24.1" y="22.0" width="1.4" height="1.2"/></g><g fill="#e85050"><rect x="7.2" y="18.6" width="1.3" height="1.1"/><rect x="8.1" y="21.9" width="1.3" height="1.1"/><rect x="9.0" y="25.2" width="1.3" height="1.1"/></g><rect x="19.6" y="17.6" width="2.3" height="2.3" fill="#3a7cd8"/><path d="M12.4 11.8 L18.4 11" stroke="#e4eefc" stroke-width="1.3"/></g>
<g transform="translate(160,204.6)"><path d="M5 11.2 L24.5 8.6 L28.9 25.1 L8.3 30.7 Z" fill="#fafafa" stroke="#3c3c3c" stroke-width="1"/><path d="M24.5 8.6 L28.9 25.1" stroke="#b4b4b4" stroke-width="1"/><path d="M5 11.2 L24.5 8.6 L25.3 12 L5.9 15 Z" fill="#1f5cb8" stroke="#1a4a9c" stroke-width="0.6"/><path d="M7.5 27.8 L28.2 22.2 L28.9 25.1 L8.3 30.7 Z" fill="#c4c4c4"/><path d="M9.3 7.6 L8.9 11 M19.9 5.6 L19.6 9.4" stroke="#8a8a8a" stroke-width="1.5" stroke-linecap="round"/><g fill="#484848"><rect x="10.6" y="17.2" width="1.4" height="1.2"/><rect x="14.5" y="16.6" width="1.4" height="1.2"/><rect x="18.4" y="16.0" width="1.4" height="1.2"/><rect x="22.3" y="15.4" width="1.4" height="1.2"/><rect x="11.5" y="20.5" width="1.4" height="1.2"/><rect x="15.4" y="19.9" width="1.4" height="1.2"/><rect x="19.3" y="19.3" width="1.4" height="1.2"/><rect x="23.2" y="18.7" width="1.4" height="1.2"/><rect x="12.4" y="23.8" width="1.4" height="1.2"/><rect x="16.3" y="23.2" width="1.4" height="1.2"/><rect x="20.2" y="22.6" width="1.4" height="1.2"/><rect x="24.1" y="22.0" width="1.4" height="1.2"/></g><g fill="#e85050"><rect x="7.2" y="18.6" width="1.3" height="1.1"/><rect x="8.1" y="21.9" width="1.3" height="1.1"/><rect x="9.0" y="25.2" width="1.3" height="1.1"/></g><rect x="19.6" y="17.6" width="2.3" height="2.3" fill="#3a7cd8"/><path d="M12.4 11.8 L18.4 11" stroke="#e4eefc" stroke-width="1.3"/></g>
<g transform="translate(160,246.6)"><path d="M5 11.2 L24.5 8.6 L28.9 25.1 L8.3 30.7 Z" fill="#fafafa" stroke="#3c3c3c" stroke-width="1"/><path d="M24.5 8.6 L28.9 25.1" stroke="#b4b4b4" stroke-width="1"/><path d="M5 11.2 L24.5 8.6 L25.3 12 L5.9 15 Z" fill="#1f5cb8" stroke="#1a4a9c" stroke-width="0.6"/><path d="M7.5 27.8 L28.2 22.2 L28.9 25.1 L8.3 30.7 Z" fill="#c4c4c4"/><path d="M9.3 7.6 L8.9 11 M19.9 5.6 L19.6 9.4" stroke="#8a8a8a" stroke-width="1.5" stroke-linecap="round"/><g fill="#484848"><rect x="10.6" y="17.2" width="1.4" height="1.2"/><rect x="14.5" y="16.6" width="1.4" height="1.2"/><rect x="18.4" y="16.0" width="1.4" height="1.2"/><rect x="22.3" y="15.4" width="1.4" height="1.2"/><rect x="11.5" y="20.5" width="1.4" height="1.2"/><rect x="15.4" y="19.9" width="1.4" height="1.2"/><rect x="19.3" y="19.3" width="1.4" height="1.2"/><rect x="23.2" y="18.7" width="1.4" height="1.2"/><rect x="12.4" y="23.8" width="1.4" height="1.2"/><rect x="16.3" y="23.2" width="1.4" height="1.2"/><rect x="20.2" y="22.6" width="1.4" height="1.2"/><rect x="24.1" y="22.0" width="1.4" height="1.2"/></g><g fill="#e85050"><rect x="7.2" y="18.6" width="1.3" height="1.1"/><rect x="8.1" y="21.9" width="1.3" height="1.1"/><rect x="9.0" y="25.2" width="1.3" height="1.1"/></g><rect x="19.6" y="17.6" width="2.3" height="2.3" fill="#3a7cd8"/><path d="M12.4 11.8 L18.4 11" stroke="#e4eefc" stroke-width="1.3"/></g>
<g><path d="M185 316.2 H191.8 V319.2 H184 Z" fill="#8a7440" opacity="0.5"/><path d="M162 291.9 H178.6 L184.8 298.4 V321.2 H162 Z" fill="#e6e6e6" stroke="#c2c2c2" stroke-width="0.7"/><rect x="164.3" y="295.2" width="18" height="24.3" fill="#f6f6f6"/><path d="M178.6 291.9 V298.4 H184.8 Z" fill="#fbfbfb" stroke="#b4b4b4" stroke-width="0.6"/><path d="M164.3 295.2 H182.3 M164.3 298.6 H182.3 M164.3 302.1 H182.3 M164.3 305.5 H182.3 M164.3 309.2 H182.3 M164.3 312.6 H182.3 M164.3 316.1 H182.3 M164.3 319.5 H182.3 M164.3 295.2 V319.5 M170.4 295.2 V319.5 M176.6 295.2 V319.5 M182.3 295.2 V319.5" stroke="#b2b2b2" stroke-width="0.7" fill="none"/><rect x="164.3" y="305.7" width="17.8" height="3.5" fill="url(#gBand)"/></g>
<g transform="translate(0,210)" fill="url(#gPg)" stroke="#86c2fc" stroke-width="0.9" stroke-linejoin="round"><path d="M163.9 123.6 L174.5 124.6 L179.5 129.8 V147 L163.9 149.6 Z"/><path d="M166.8 126 L176.4 126.6 L182 132 V149.5 L166.8 151.8 Z"/><path d="M171.2 129 L181.6 129.5 L188.9 136.6 V152 L171.2 154.4 Z"/><path d="M181.6 129.5 L182 136 L188.9 136.6" fill="#ffffff"/></g>
<g><path d="M178.2 344.9 L181.2 345.4 L190.8 359.6 L190.2 361.6 L181.6 363.6 L179.3 362.6 L186.2 356.2 Z" fill="#dde6ee" stroke="#b8c4d0" stroke-width="0.4"/><path d="M178.2 344.9 L171.2 351.2 L179.3 362.6 L186.2 356.2 Z" fill="url(#gBook)" stroke="#0e2e78" stroke-width="0.5"/><path d="M174.7 350.3 L178.6 346.8 L180 348.8 L176.1 352.3 Z" fill="#f4f4f4"/><path d="M171.6 351.6 L179.4 362.4" stroke="#0a1c50" stroke-width="1" stroke-dasharray="0.8 1"/></g>
<g transform="translate(161,370.8)"><path d="M4.3 5.4 H18 L25.6 12.6 V34.6 H4.3 Z" fill="#f3f3f3" stroke="#d6d6d6" stroke-width="0.8"/><path d="M6.8 10 H24 V32.6 H6.8 Z" fill="#f5f5f5" stroke="#cbcbcb" stroke-width="1.2"/><path d="M18 5.4 V12.6 H25.6 Z" fill="#fafafa" stroke="#cdcdcd" stroke-width="0.7"/><path d="M15.5 11 V32 M20 13 V32" stroke="#e9e9e9" stroke-width="1.4"/></g>
<g transform="translate(161,412.8)"><path d="M4.3 5.4 H18 L25.6 12.6 V34.6 H4.3 Z" fill="#f3f3f3" stroke="#d6d6d6" stroke-width="0.8"/><path d="M6.8 10 H24 V32.6 H6.8 Z" fill="#f5f5f5" stroke="#cbcbcb" stroke-width="1.2"/><path d="M18 5.4 V12.6 H25.6 Z" fill="#fafafa" stroke="#cdcdcd" stroke-width="0.7"/><path d="M15.5 11 V32 M20 13 V32" stroke="#e9e9e9" stroke-width="1.4"/></g>
<g transform="translate(161,454.8)"><path d="M4.3 5.4 H18 L25.6 12.6 V34.6 H4.3 Z" fill="#f3f3f3" stroke="#d6d6d6" stroke-width="0.8"/><path d="M6.8 10 H24 V32.6 H6.8 Z" fill="#f5f5f5" stroke="#cbcbcb" stroke-width="1.2"/><path d="M18 5.4 V12.6 H25.6 Z" fill="#fafafa" stroke="#cdcdcd" stroke-width="0.7"/><path d="M15.5 11 V32 M20 13 V32" stroke="#e9e9e9" stroke-width="1.4"/></g>
<polygon points="171.4,500.9 172.2,503.8 175.0,504.5 172.6,506.1 172.8,509.0 170.5,507.2 167.8,508.3 168.9,505.5 166.9,503.3 169.9,503.5" fill="#ffe100" stroke="#c89400" stroke-width="0.5" stroke-linejoin="round"/>
<polygon points="164.5,506.2 166.1,508.6 169.0,508.4 167.2,510.7 168.3,513.4 165.5,512.3 163.3,514.3 163.5,511.3 160.9,509.8 163.8,509.0" fill="#ffe100" stroke="#c89400" stroke-width="0.5" stroke-linejoin="round"/>
<polygon points="173.6,508.1 174.5,510.9 177.4,511.4 175.0,513.2 175.4,516.1 173.0,514.4 170.4,515.6 171.3,512.8 169.2,510.7 172.2,510.7" fill="#ffe100" stroke="#c89400" stroke-width="0.5" stroke-linejoin="round"/>
<path d="M164.4 503.4 L173.6 516.4" stroke="#1a1a1a" stroke-width="1.3" stroke-linecap="round"/>
</svg>
<div class="a" style="left:156px;top:496px;width:230px;height:1px;background:#c8c8c8"></div>
<div class="a" style="left:182px;top:497px;width:1px;height:23px;background:#dcdcdc"></div>
<div class="t" id="x_modcur" style="left:191.5px;top:503px;color:#0e1870;letter-spacing:0.466px;">Modify current report</div>
<div class="a" style="left:156px;top:520px;width:230px;height:8px;background:linear-gradient(#e9eff8,#d3dff0);border-top:1px solid #c5d3e6;border-radius:0 0 2px 2px"></div>
<div class="a" style="left:262px;top:524px;width:2px;height:1px;background:#7a92b8"></div>
<div class="a" style="left:267px;top:524px;width:2px;height:1px;background:#7a92b8"></div>
<div class="a" style="left:272px;top:524px;width:2px;height:1px;background:#7a92b8"></div>
<div class="a" style="left:277px;top:524px;width:2px;height:1px;background:#7a92b8"></div>
<svg class="a" style="left:140px;top:275px" width="270" height="66" viewBox="140 275 270 66"><rect x="144.95" y="280.35" width="259.5" height="55.9" rx="9" ry="9" fill="none" stroke="#e5141c" stroke-width="2.7"/></svg>
</body></html>
